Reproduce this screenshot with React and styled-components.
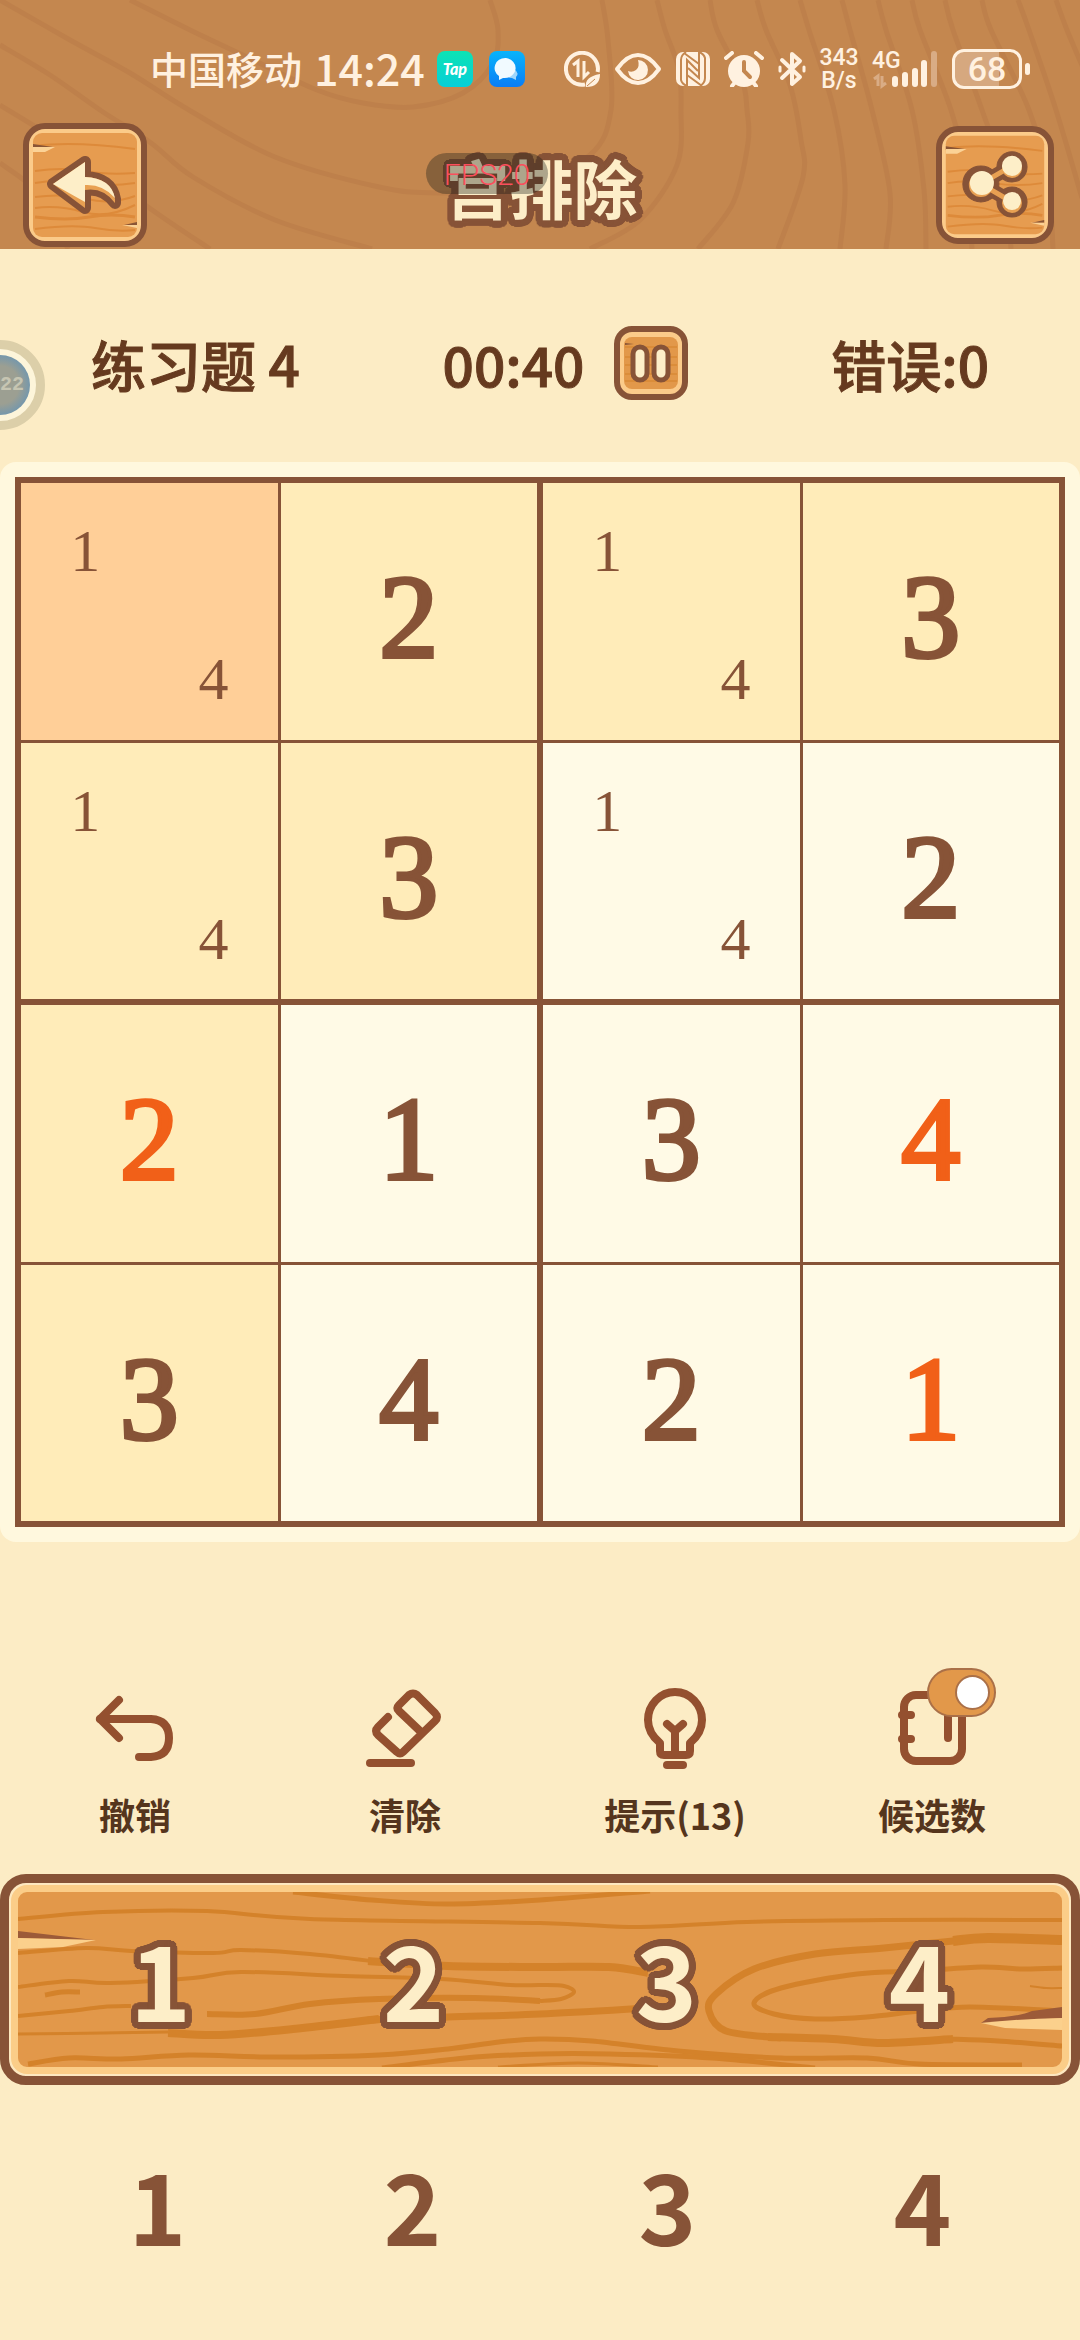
import React, { useState } from "react";
import styled, { createGlobalStyle } from "styled-components";

const GlobalStyle = createGlobalStyle`
  *, *:before, *:after {
    box-sizing: border-box;
  }
  body {
    margin: 0;
    background-color: #fcecc5;
    font-family: "Noto Sans CJK SC", "Noto Sans", sans-serif;
  }
  button {
    font-family: inherit;
    border: none;
    padding: 0;
    margin: 0;
    background: transparent;
    cursor: pointer;
  }
  svg {
    display: block;
  }
`;

// round outline around thick lettering
const outline = (radius, color) =>
  Array.from({ length: 32 }, (_, i) => {
    const angle = (i * Math.PI) / 16;
    const x = Math.round(Math.cos(angle) * radius);
    const y = Math.round(Math.sin(angle) * radius);
    return `${x}px ${y}px 0 ${color}`;
  }).join(", ");

// smooth curve through a list of points
const curve = (points) =>
  points
    .map((point, i) => {
      if (i === 0) return `M${point.join(" ")}`;
      const before = points[i - 2] || points[i - 1];
      const from = points[i - 1];
      const after = points[i + 1] || point;
      const c1 = [0, 1].map((k) => from[k] + (point[k] - before[k]) / 6);
      const c2 = [0, 1].map((k) => point[k] - (after[k] - from[k]) / 6);
      return `C${[...c1, ...c2, ...point].join(" ")}`;
    })
    .join("");

/* ---------- page ---------- */

const Page = styled.main`
  position: relative;
  min-height: 100vh;
  overflow: hidden;
  background-color: #fcecc5;
`;

const Header = styled.header`
  display: grid;
  background-color: #c4874f;
`;

const Rings = styled.svg`
  grid-area: 1 / 1;
  width: 100%;
  height: 100%;
  contain: size;
`;

const HeaderContent = styled.div`
  grid-area: 1 / 1;
  position: relative;
  padding: 48px 0 2px;
`;

/* ---------- status bar ---------- */

const StatusBar = styled.div`
  display: flex;
  justify-content: space-between;
  align-items: center;
  height: 42px;
  padding: 0 50px 0 150px;
  color: #fff1e0;
`;

const StatusGroup = styled.div`
  display: flex;
  align-items: center;
  gap: ${(props) => props.$gap}px;
`;

const Carrier = styled.span`
  font-size: 38px;
  line-height: 40px;
  font-weight: 500;
  padding-bottom: 2px;
`;

const Clock = styled.span`
  font-size: 43px;
  line-height: 40px;
  font-weight: 500;
  padding-bottom: 4px;
`;

const AppBadge = styled.span`
  display: flex;
  align-items: center;
  justify-content: center;
  width: 36px;
  height: 36px;
  border-radius: 8px;
  color: white;
  font: italic 900 16px/36px "Lato", sans-serif;
  background: ${(props) => props.$bg};
`;

const NetSpeed = styled.span`
  display: flex;
  flex-direction: column;
  align-items: center;
  width: 38px;
  font: 500 23px/23px "Roboto", sans-serif;
`;

const Signal = styled.span`
  display: grid;
  width: 66px;
  height: 40px;
`;

const SignalType = styled.span`
  grid-area: 1 / 1;
  font: 500 23px/23px "Roboto", sans-serif;
`;

const SignalBars = styled.svg`
  grid-area: 1 / 1;
`;

const Battery = styled.span`
  display: flex;
  align-items: center;
  gap: 3px;
  &:after {
    content: "";
    width: 5px;
    height: 12px;
    border-radius: 3px;
    background-color: #fff1e0;
  }
`;

const BatteryBody = styled.span`
  width: 70px;
  height: 40px;
  border: 3px solid #fff1e0;
  border-radius: 12px;
  text-align: center;
  font: 500 34px/35px "Roboto", sans-serif;
  background: linear-gradient(to right, #d6a87f 68%, transparent 68%);
`;

/* ---------- title row ---------- */

const TitleRow = styled.div`
  display: flex;
  justify-content: space-between;
  align-items: center;
  height: 124px;
  margin-top: 33px;
  padding: 0 26px 0 23px;
`;

const Title = styled.h1`
  margin: 0;
  padding-top: 2px;
  font-size: 64px;
  line-height: 96px;
  font-weight: 700;
  color: #fdeec8;
  text-shadow: ${outline(7, "#875337")};
`;

const WoodButton = styled.button`
  width: ${(props) => props.$size}px;
  height: ${(props) => props.$size}px;
  border: 6px solid #875337;
  border-radius: ${(props) => props.$radius}px;
  background-color: #fbcb8a;
  overflow: hidden;
`;

const FpsPill = styled.div`
  position: absolute;
  top: 153px;
  left: calc(50% - 114px);
  width: 122px;
  height: 41px;
  border-radius: 21px;
  text-align: center;
  font: 300 30px/43px "Roboto", sans-serif;
  color: #fa4f5c;
  background-color: rgba(18, 24, 20, 0.34);
`;

/* ---------- game info ---------- */

const Info = styled.section`
  display: flex;
  justify-content: space-between;
  align-items: center;
  height: 213px;
  padding: 14px 91px 0;
  font-size: 55px;
  line-height: 80px;
  font-weight: 500;
  color: #663a1f;
  -webkit-text-stroke: 1px #663a1f;
`;

const Timer = styled.div`
  display: flex;
  align-items: center;
  gap: 30px;
`;

const FloatBall = styled.div`
  position: absolute;
  top: 340px;
  left: -45px;
  width: 90px;
  height: 90px;
  border-radius: 50%;
  border: 9px solid #dccfa9;
  background-color: #fdf5da;
  padding: 6px;
`;

const FloatBallCore = styled.div`
  height: 100%;
  border-radius: 50%;
  padding-left: 30px;
  font: 700 20px/60px "Liberation Mono", monospace;
  color: #c6c5b2;
  background: radial-gradient(circle, #9c9f92 45%, #7397ad 72%);
`;

/* ---------- board ---------- */

const BoardPanel = styled.section`
  padding: 15px;
  border-radius: 16px;
  background-color: #fff8de;
`;

const Board = styled.div`
  display: grid;
  grid-template-columns: 1fr 1fr;
  gap: 6px;
  padding: 6px;
  background-color: #875337;
`;

const Box = styled.div`
  display: grid;
  grid-template-columns: 1fr 1fr;
  grid-template-rows: 1fr 1fr;
  gap: 3px;
  aspect-ratio: 1;
`;

const cellColors = {
  selected: "#ffcf98",
  related: "#ffecb9",
  plain: "#fffae6",
};

const Cell = styled.button`
  display: grid;
  place-items: center;
  min-width: 0;
  min-height: 0;
  font: 400 118px/160px "Liberation Serif", serif;
  color: ${(props) => (props.$mine ? "#f16018" : "#875337")};
  background-color: ${(props) => cellColors[props.$tone]};
`;

const Value = styled.span`
  padding-top: 14px;
  -webkit-text-stroke: 4px currentColor;
`;

const Notes = styled.span`
  display: grid;
  grid-template-columns: 1fr 1fr;
  grid-template-rows: 1fr 1fr;
  place-items: center;
  width: 100%;
  height: 100%;
  font-size: 60px;
  line-height: 72px;
`;

const Note = styled.span`
  padding-top: 8px;
`;

/* ---------- tools ---------- */

const Tools = styled.section`
  display: grid;
  grid-template-columns: 270fr 270fr 270fr 244fr;
  padding: 143px 26px 36px 0;
`;

const Tool = styled.div`
  display: flex;
  justify-content: center;
`;

const ToolButton = styled.button`
  display: flex;
  flex-direction: column;
  align-items: center;
  gap: 21px;
  font-size: 36px;
  line-height: 48px;
  font-weight: 700;
  color: #55351d;
`;

const ToolIcon = styled.svg`
  width: 84px;
  height: 84px;
  fill: none;
  stroke: #94502f;
  stroke-width: 8;
  stroke-linecap: round;
  stroke-linejoin: round;
`;

const ToggleHolder = styled.div`
  position: relative;
`;

const Toggle = styled.input`
  appearance: none;
  position: absolute;
  top: -17px;
  right: -10px;
  width: 69px;
  height: 49px;
  margin: 0;
  border: 2px solid #aa7048;
  border-radius: 25px;
  background-color: #e2984a;
  cursor: pointer;
  &:before {
    content: "";
    position: absolute;
    top: 5px;
    left: 6px;
    width: 35px;
    height: 35px;
    border: 2px solid #aa7048;
    border-radius: 50%;
    background-color: white;
  }
  &:checked:before {
    left: 26px;
  }
`;

/* ---------- number pads ---------- */

const Plank = styled.section`
  border: 9px solid #875337;
  border-radius: 26px;
  background-color: #fde8c0;
  padding: 2px;
`;

const PlankFace = styled.div`
  display: grid;
  border: 7px solid #fbcd88;
  border-radius: 16px;
  overflow: hidden;
  background-color: #e2984a;
`;

const Grain = styled.svg`
  grid-area: 1 / 1;
  width: 100%;
  height: 175px;
`;

const Keys = styled.div`
  grid-area: 1 / 1;
  display: grid;
  grid-template-columns: repeat(4, 1fr);
  padding: 0 16px 6px;
`;

const Key = styled.button`
  font-size: 104px;
  line-height: 169px;
  font-weight: 700;
  color: #fdeec8;
  text-shadow: ${outline(7, "#875337")};
`;

const NoteKeys = styled.section`
  display: grid;
  grid-template-columns: repeat(4, 1fr);
  padding: 30px;
`;

const NoteKey = styled.button`
  font-size: 98px;
  line-height: 176px;
  font-weight: 700;
  color: #875337;
`;

/* ---------- drawings ---------- */

const ringPoints = [
  [[130, 0], [190, 30], [247, 57], [317, 90], [363, 103], [413, 107], [463, 93], [493, 63], [498, 30], [490, 0]],
  [[0, 0], [70, 40], [130, 73], [189, 110], [275, 157], [379, 187], [440, 193], [520, 188], [590, 155], [611, 110], [608, 40], [602, 0]],
  [[0, 45], [50, 75], [100, 110], [151, 143], [193, 177], [275, 220], [372, 249]],
  [[0, 105], [80, 155], [148, 207], [210, 249]],
  [[0, 163], [40, 195], [68, 249]],
  [[657, 0], [665, 30], [679, 70], [681, 110], [677, 165], [640, 220], [590, 249]],
  [[710, 0], [717, 30], [742, 80], [747, 110], [748, 143], [733, 203], [698, 249]],
  [[757, 0], [766, 30], [790, 85], [801, 140], [803, 177], [778, 249]],
  [[800, 0], [809, 30], [834, 110], [845, 185], [840, 249]],
  [[842, 0], [850, 30], [872, 110], [890, 193], [886, 249]],
  [[878, 0], [886, 30], [912, 110], [924, 190], [926, 249]],
  [[912, 0], [920, 30], [951, 110], [968, 180], [972, 249]],
  [[945, 0], [953, 30], [982, 110], [1005, 180], [1011, 249]],
  [[982, 0], [991, 30], [1029, 110], [1048, 180], [1053, 249]],
  [[1018, 0], [1029, 30], [1056, 110], [1082, 198]],
  [[1056, 0], [1067, 30], [1084, 70]],
];

const HeaderRings = () => (
  <Rings viewBox="0 0 1080 249" preserveAspectRatio="xMidYMid slice" fill="none" stroke="#be804b" strokeWidth="5" aria-hidden="true">
    {ringPoints.map((points, i) => (
      <path key={i} d={curve(points)} />
    ))}
  </Rings>
);

const SmallGrain = () => (
  <>
    <rect x="0" y="0" width="104" height="104" rx="9" fill="#e69c50" />
    <g fill="none" stroke="#dd8a3a" strokeWidth="2">
      <path d="M2 13Q40 8 102 16" />
      <path d="M2 38Q30 34 52 38T102 40" />
      <path d="M2 50Q24 46 50 50T102 50" />
      <path d="M2 64Q30 60 54 66T102 63" />
      <path d="M2 75Q26 72 50 79T102 72" />
      <path d="M2 84Q34 88 56 84T102 84" strokeWidth="3" />
      <path d="M2 96Q40 91 62 95T102 97" />
    </g>
    <path d="M0 11L20 14L0 15Z" fill="#8a5535" />
    <path d="M0 14H22L12 19H0Z" fill="#fbd296" />
    <path d="M104 89L91 92L104 92Z" fill="#8a5535" />
    <path d="M104 92H89L104 95Z" fill="#fbd296" />
  </>
);

const BackArt = () => (
  <svg width="112" height="112" viewBox="-4 -4 112 112" aria-hidden="true">
    <SmallGrain />
    <path
      d="M20 51L52 29V44Q78 45 82 66V70Q70 54 52 57V75Z"
      fill="#875337"
      stroke="#875337"
      strokeWidth="12"
      strokeLinejoin="round"
    />
    <path d="M20 51L52 29V44Q78 45 82 66V70Q70 54 52 57V75Z" fill="#e8a052" />
    <path d="M20 51L52 29V44Q78 45 82 65Q70 51 52 52V69Z" fill="#fdeec8" />
  </svg>
);

const ShareArt = () => (
  <svg width="106" height="106" viewBox="-4 -4 112 112" aria-hidden="true">
    <SmallGrain />
    <g transform="scale(1.06)">
      <g fill="#875337" stroke="#875337">
        <path d="M35 48L66 30M35 48L66 66" strokeWidth="14" />
        <circle cx="35" cy="48" r="18" />
        <circle cx="66" cy="31" r="15" />
        <circle cx="66" cy="66" r="15" />
      </g>
      <path d="M35 48L66 30M35 48L66 66" stroke="#e8a052" strokeWidth="5" />
      <g fill="#e8a052">
        <circle cx="35" cy="49" r="12" />
        <circle cx="66" cy="32" r="10" />
        <circle cx="66" cy="67" r="10" />
      </g>
      <g fill="#fdeec8">
        <circle cx="36" cy="47" r="12" />
        <circle cx="66" cy="30" r="10" />
        <circle cx="66" cy="65" r="9" />
      </g>
    </g>
  </svg>
);

const PauseArt = () => (
  <svg width="62" height="62" viewBox="0 0 62 62" aria-hidden="true">
    <rect x="4" y="5" width="54" height="52" rx="8" fill="#e2984a" />
    <g stroke="#d4822a" strokeWidth="1">
      <path d="M5 15H57M5 25H57M5 33H57M5 42H57M5 49H57" />
    </g>
    <path d="M5 11L14 12L5 13Z" fill="#8a5535" />
    <g fill="#fdeec8" stroke="#875337" strokeWidth="5">
      <rect x="13" y="15" width="14" height="33" rx="7" />
      <rect x="34" y="15" width="14" height="33" rx="7" />
    </g>
  </svg>
);

const grainLines = [
  { width: 4, points: [[0, 27], [85, 20], [189, 19], [292, 27], [522, 31], [622, 35], [729, 30], [866, 28], [1044, 28]] },
  { width: 5, points: [[275, 0], [354, 8], [430, 12], [522, 8], [632, -1]] },
  { width: 4, points: [[0, 61], [68, 56], [113, 59], [195, 61], [223, 58], [292, 62], [361, 70]] },
  { width: 8, points: [[350, 69], [430, 74], [522, 75], [591, 75], [630, 81]] },
  { width: 4, points: [[0, 95], [51, 89], [92, 91], [175, 86], [223, 80], [326, 84], [423, 87], [492, 93], [522, 93], [546, 94], [556, 100], [543, 107], [522, 109]] },
  { width: 6, points: [[522, 109], [457, 106], [361, 107], [292, 112], [237, 122], [189, 122]] },
  { width: 4, points: [[0, 124], [51, 119], [85, 115], [113, 114]] },
  { width: 5, points: [[27, 103], [44, 100], [62, 100]] },
  { width: 8, points: [[150, 141], [202, 143], [275, 137], [361, 127]] },
  { width: 7, points: [[350, 128], [430, 125], [522, 122], [630, 116]] },
  { width: 3, points: [[0, 142], [85, 141], [150, 140]] },
  { width: 5, points: [[10, 172], [51, 166], [103, 167], [171, 163], [257, 165], [361, 163], [430, 157], [481, 150], [522, 147], [574, 149], [660, 159], [763, 166], [849, 166], [901, 172], [1004, 173]] },
  { width: 5, points: [[364, 176], [447, 166], [522, 162], [591, 162], [694, 166], [797, 176]] },
  { width: 3, points: [[480, 175], [560, 171], [640, 175]] },
  { width: 10, points: [[1044, 48], [970, 46], [935, 49]] },
  { width: 7, points: [[945, 48], [866, 56], [797, 62], [736, 77], [698, 102], [691, 119], [708, 139], [763, 146]] },
  { width: 8, points: [[750, 145], [815, 147], [866, 151], [935, 147]] },
  { width: 5, points: [[930, 147], [980, 149], [1044, 154]] },
  { width: 5, points: [[1044, 76], [1004, 77], [963, 75], [901, 79], [839, 82], [763, 96], [736, 111], [756, 122], [797, 127], [849, 125], [901, 119], [952, 115], [1044, 119]] },
  { width: 2, points: [[1012, 94], [1028, 96], [1044, 96]] },
];

const PlankGrain = () => (
  <Grain viewBox="0 0 1044 175" preserveAspectRatio="none" aria-hidden="true">
    {grainLines.map((line, i) => (
      <path key={i} d={curve(line.points)} fill="none" stroke="#d4822a" strokeWidth={line.width} />
    ))}
    <path d="M0 39L76 48L0 46Z" fill="#9c5a38" />
    <path d="M0 46L78 48L45 55L0 57Z" fill="#fbd08c" />
    <path d="M1044 115L1014 119Q1000 125 970 126L963 131L1044 126Z" fill="#9c5a38" />
    <path d="M963 131Q1000 127 1044 126V138L987 136Z" fill="#fbd08c" />
  </Grain>
);

const UndoIcon = () => (
  <ToolIcon viewBox="0 0 84 84">
    <path d="M26 15L7 34L26 53" />
    <path d="M7 34H58Q76 35 76 53T58 72H46" />
  </ToolIcon>
);

const EraserIcon = () => (
  <ToolIcon viewBox="0 0 84 84">
    <path d="M25 32L15 42Q11 46 15 50L34 67Q37 70 40 67L72 36Q76 32 72 28L54 10Q50 7 46 10L36 20Q33 23 36 26L57 46" />
    <path d="M7 78H48" />
  </ToolIcon>
);

const BulbIcon = () => (
  <ToolIcon viewBox="0 0 84 84">
    <path d="M27 58Q15 48 15 35A27 28 0 0 1 69 35Q69 48 57 58V66Q57 70 53 70H31Q27 70 27 66Z" />
    <path d="M42 68V46M34 39L42 46L50 39" />
    <path d="M34 80H50" />
  </ToolIcon>
);

const NotesIcon = () => (
  <ToolIcon viewBox="0 0 84 84">
    <rect x="14" y="10" width="58" height="66" rx="12" />
    <path d="M12 30H21M12 54H21M58 14V53" />
  </ToolIcon>
);

const StatusIcons = () => (
  <>
    <svg width="36" height="36" viewBox="0 0 36 36" fill="none" stroke="#fff1e0" strokeWidth="4" aria-hidden="true">
      <path d="M21 33.5A16 16 0 1 1 33.6 21" />
      <path d="M9 14L14 10V26M20 10V26L25 21" strokeWidth="3" />
      <path d="M22 36Q20 26 36 23Q36 36 22 36Z" fill="#fff1e0" stroke="none" />
      <path d="M23 35L31 28" stroke="#c4874f" strokeWidth="1" />
    </svg>
    <svg width="48" height="36" viewBox="0 0 48 36" aria-hidden="true">
      <path d="M3 18Q13 4 24 4T45 18Q35 32 24 32T3 18Z" fill="none" stroke="#fff1e0" strokeWidth="4" strokeLinejoin="round" />
      <path d="M24 9A10 10 0 1 1 14 20Q18 22 22 19T24 9Z" fill="#fff1e0" />
    </svg>
    <svg width="34" height="36" viewBox="0 0 34 36" aria-hidden="true">
      <rect x="0" y="1" width="34" height="34" rx="7" fill="#fff1e0" />
      <path d="M10 1Q5 4 5 9V29Q6 33 11 35V9L22 20M24 35Q29 32 29 27V7Q28 3 23 1V27L12 17M8 2L23 13M11 24L26 35" stroke="#c4874f" strokeWidth="2" fill="none" />
    </svg>
    <svg width="40" height="36" viewBox="0 0 40 36" aria-hidden="true">
      <circle cx="20" cy="20" r="16" fill="#fff1e0" />
      <path d="M2 7L8 2M38 7L32 2M8 35L12 30M32 35L28 30" stroke="#fff1e0" strokeWidth="4" strokeLinecap="round" />
      <path d="M20 11V20L26 26" stroke="#c4874f" strokeWidth="4" strokeLinecap="round" fill="none" />
    </svg>
    <svg width="28" height="36" viewBox="0 0 28 36" fill="none" stroke="#fff1e0" strokeWidth="4" strokeLinecap="round" strokeLinejoin="round" aria-hidden="true">
      <path d="M4 9L22 26L14 33V3L22 10L4 27" />
      <path d="M2 16V20M26 16V20" strokeWidth="3" />
    </svg>
  </>
);

/* ---------- data ---------- */

// each box holds its four cells, left to right and top to bottom
const boxes = [
  [
    { notes: [1, 4], tone: "selected" },
    { value: 2, tone: "related" },
    { notes: [1, 4], tone: "related" },
    { value: 3, tone: "related" },
  ],
  [
    { notes: [1, 4], tone: "related" },
    { value: 3, tone: "related" },
    { notes: [1, 4], tone: "plain" },
    { value: 2, tone: "plain" },
  ],
  [
    { value: 2, tone: "related", mine: true },
    { value: 1, tone: "plain" },
    { value: 3, tone: "related" },
    { value: 4, tone: "plain" },
  ],
  [
    { value: 3, tone: "plain" },
    { value: 4, tone: "plain", mine: true },
    { value: 2, tone: "plain" },
    { value: 1, tone: "plain", mine: true },
  ],
];

const digits = [1, 2, 3, 4];

export default function App() {
  const [showNotes, setShowNotes] = useState(true);

  return (
    <>
      <GlobalStyle />
      <Page>
        <Header>
          <HeaderRings />
          <HeaderContent>
            <StatusBar>
              <StatusGroup $gap={12}>
                <Carrier>中国移动</Carrier>
                <Clock>14:24</Clock>
                <StatusGroup $gap={16}>
                  <AppBadge $bg="linear-gradient(#0ce3b4, #06cfd8)">Tap</AppBadge>
                  <AppBadge $bg="linear-gradient(#08b4fb, #0a7df5)">
                    <svg width="26" height="26" viewBox="0 0 26 26" aria-hidden="true">
                      <path d="M20 13Q26 17 22 21V24L18 22Q13 22 12 18Z" fill="#9fd6fb" />
                      <path d="M12 2A11 10 0 1 1 9 22L5 24V20A11 10 0 0 1 12 2Z" fill="#f1faff" />
                    </svg>
                  </AppBadge>
                </StatusGroup>
              </StatusGroup>
              <StatusGroup $gap={14}>
                <StatusIcons />
                <NetSpeed>
                  <span>343</span>
                  <span>B/s</span>
                </NetSpeed>
                <Signal>
                  <SignalType>4G</SignalType>
                  <SignalBars width="66" height="40" viewBox="0 0 66 40" aria-hidden="true">
                    <g fill="#fff1e0">
                      <rect x="20" y="27" width="6" height="11" rx="3" />
                      <rect x="30" y="23" width="6" height="15" rx="3" />
                      <rect x="40" y="19" width="6" height="19" rx="3" />
                      <rect x="49" y="11" width="6" height="27" rx="3" />
                    </g>
                    <rect x="59" y="2" width="6" height="36" rx="3" fill="#d9ac85" />
                    <path d="M2 30L6 27V37M10 27V37L14 34" fill="none" stroke="#d9ac85" strokeWidth="3" />
                  </SignalBars>
                </Signal>
                <Battery>
                  <BatteryBody>68</BatteryBody>
                </Battery>
              </StatusGroup>
            </StatusBar>
            <TitleRow>
              <WoodButton $size={124} $radius={22} aria-label="返回">
                <BackArt />
              </WoodButton>
              <Title>宫排除</Title>
              <WoodButton $size={118} $radius={22} aria-label="分享">
                <ShareArt />
              </WoodButton>
            </TitleRow>
            <FpsPill>FPS20</FpsPill>
          </HeaderContent>
        </Header>

        <Info>
          <span>练习题 4</span>
          <Timer>
            <span>00:40</span>
            <WoodButton $size={74} $radius={18} aria-label="暂停">
              <PauseArt />
            </WoodButton>
          </Timer>
          <span>错误:0</span>
        </Info>
        <FloatBall>
          <FloatBallCore>22</FloatBallCore>
        </FloatBall>

        <BoardPanel>
          <Board>
            {boxes.map((cells, boxIndex) => (
              <Box key={boxIndex}>
                {cells.map((cell, index) => (
                  <Cell key={index} $tone={cell.tone} $mine={cell.mine}>
                    {cell.value && <Value>{cell.value}</Value>}
                    {cell.notes && showNotes && (
                      <Notes>
                        {digits.map((digit) => (
                          <Note key={digit}>{cell.notes.includes(digit) ? digit : ""}</Note>
                        ))}
                      </Notes>
                    )}
                  </Cell>
                ))}
              </Box>
            ))}
          </Board>
        </BoardPanel>

        <Tools>
          <Tool>
            <ToolButton>
              <UndoIcon />
              撤销
            </ToolButton>
          </Tool>
          <Tool>
            <ToolButton>
              <EraserIcon />
              清除
            </ToolButton>
          </Tool>
          <Tool>
            <ToolButton>
              <BulbIcon />
              提示(13)
            </ToolButton>
          </Tool>
          <Tool>
            <ToggleHolder>
              <ToolButton as="label" htmlFor="notes-toggle">
                <NotesIcon />
                候选数
              </ToolButton>
              <Toggle
                id="notes-toggle"
                type="checkbox"
                checked={showNotes}
                onChange={(e) => setShowNotes(e.target.checked)}
              />
            </ToggleHolder>
          </Tool>
        </Tools>

        <Plank>
          <PlankFace>
            <PlankGrain />
            <Keys>
              {digits.map((digit) => (
                <Key key={digit}>{digit}</Key>
              ))}
            </Keys>
          </PlankFace>
        </Plank>

        <NoteKeys>
          {digits.map((digit) => (
            <NoteKey key={digit}>{digit}</NoteKey>
          ))}
        </NoteKeys>
      </Page>
    </>
  );
}
